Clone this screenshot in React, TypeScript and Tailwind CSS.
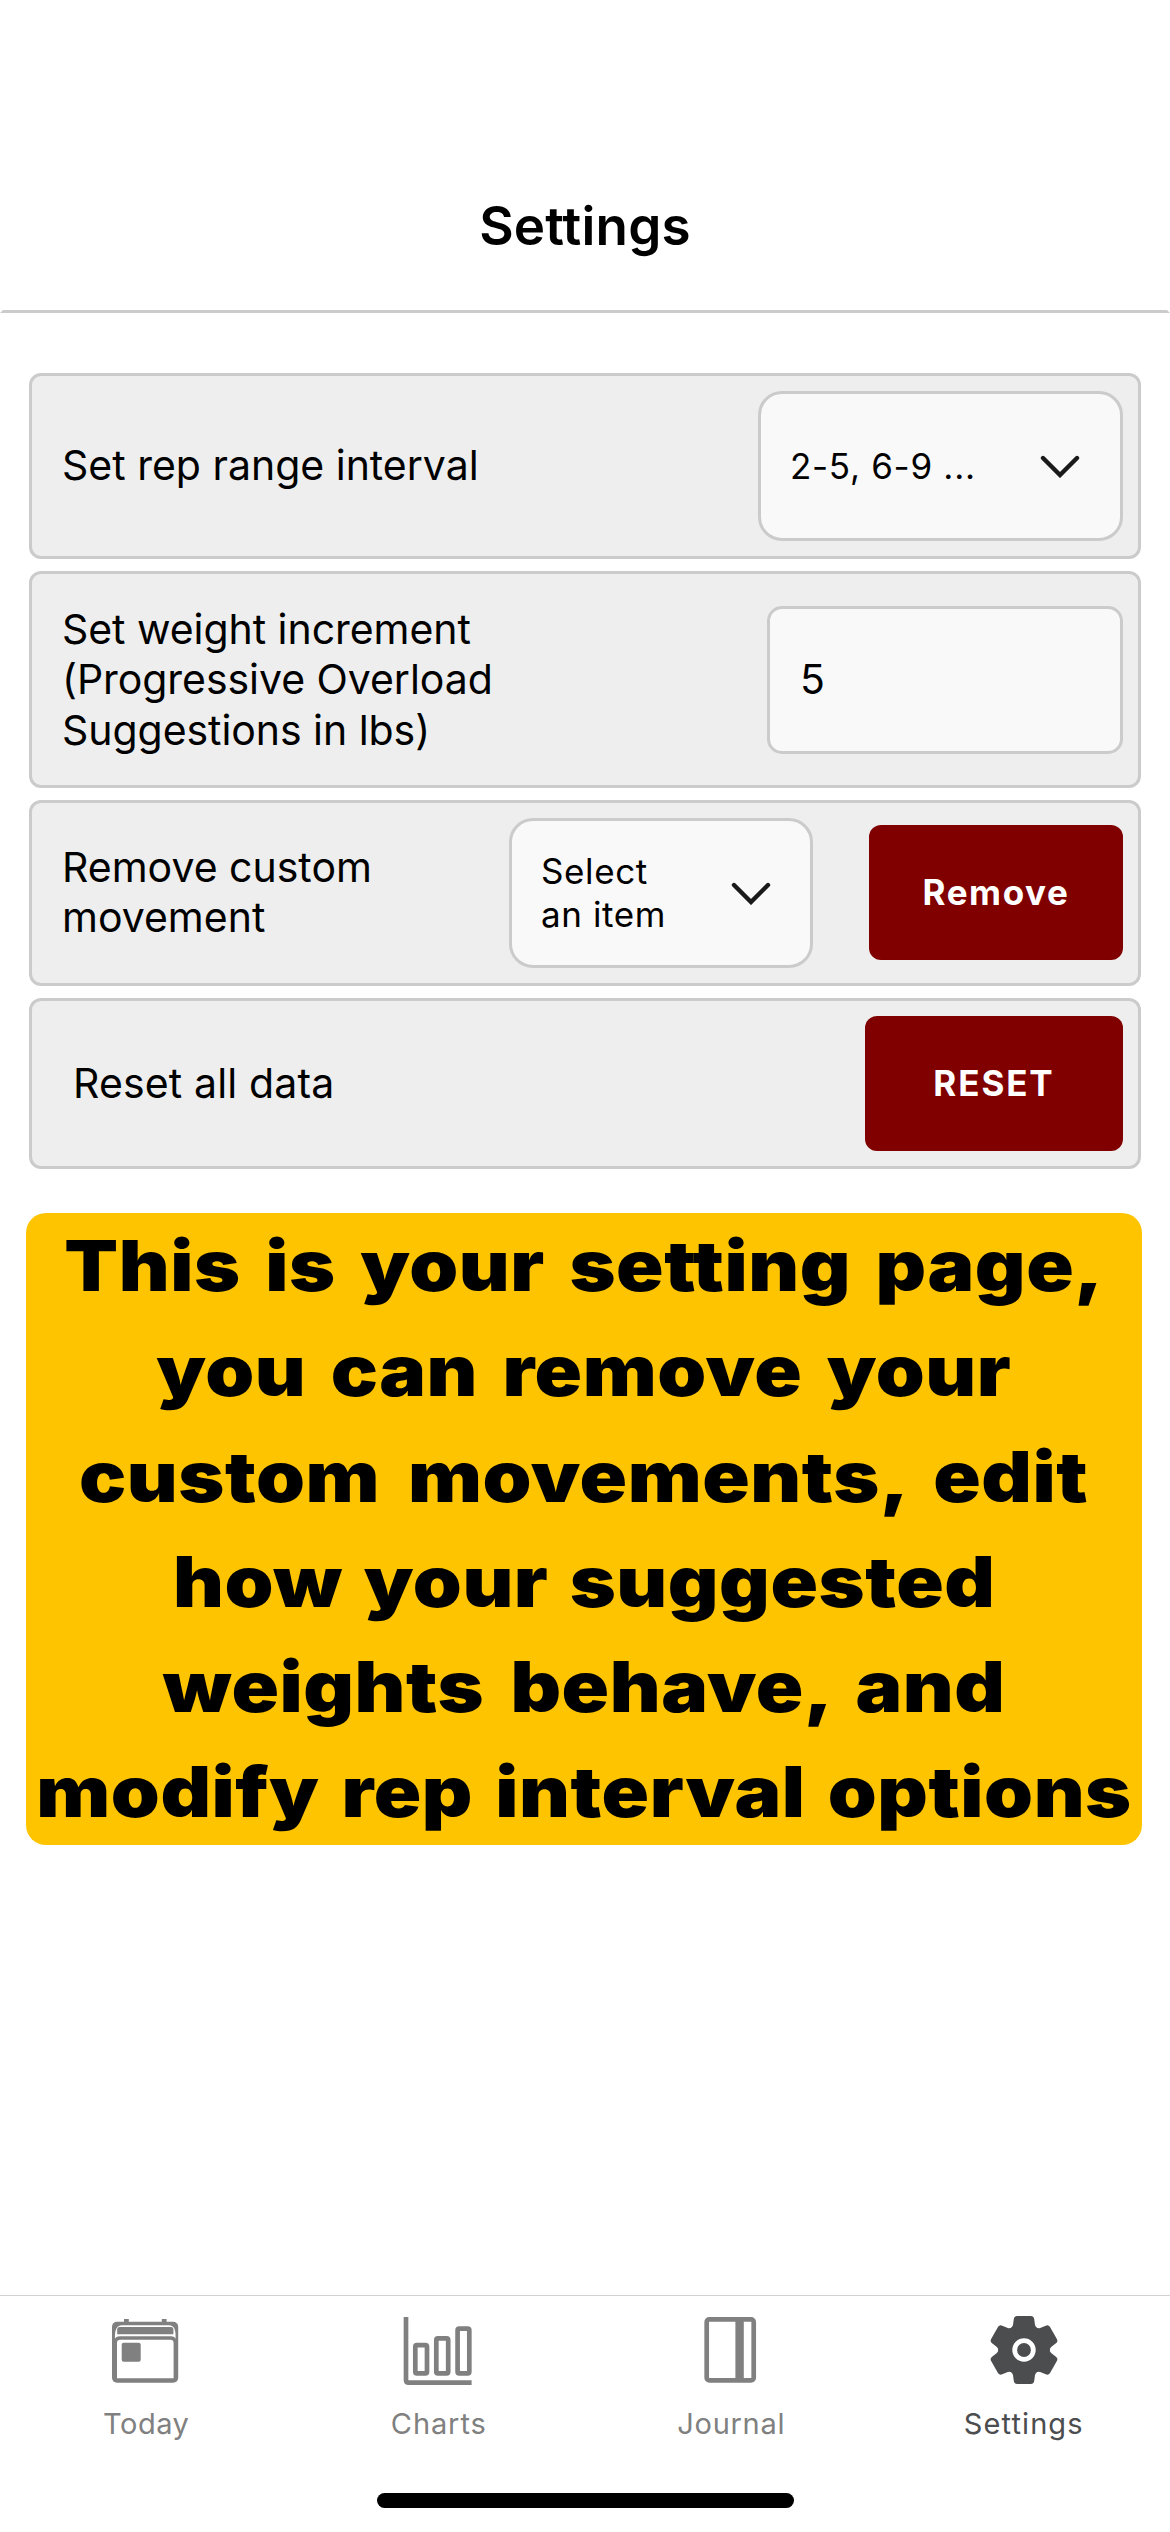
import React from "react";

function Chevron() {
  return (
    <svg width="40" height="23" viewBox="0 0 40 23" fill="none" className="shrink-0">
      <path d="M3 3 L20 20 L37 3" stroke="#1a1a1a" strokeWidth="4.4" strokeLinecap="round" strokeLinejoin="miter" />
    </svg>
  );
}

function Row({ className, children }: { className: string; children: React.ReactNode }) {
  return (
    <div
      className={`flex items-center justify-between rounded-[12px] border-[3px] border-[#cbcbcb] bg-[#eeeeee] pr-[15px] ${className}`}
    >
      {children}
    </div>
  );
}

function Label({ lines, className = "" }: { lines: string[]; className?: string }) {
  return (
    <div className={`text-[41px] leading-[50.5px] whitespace-nowrap ${className}`}>
      {lines.map((line) => (
        <div key={line}>{line}</div>
      ))}
    </div>
  );
}

function TodayIcon() {
  return (
    <svg width="72" height="72" viewBox="0 0 72 72" fill="#808080">
      <rect x="14" y="4" width="4.8" height="5" />
      <rect x="51.8" y="4" width="4.8" height="5" />
      <rect x="2" y="6.7" width="66.2" height="61" rx="5" />
      <path d="M5 24 C4.6 15 6.5 10.2 12 10.2 H59 C64.5 10.2 66 15 65.6 24 C65 21.8 63.5 21.4 61 21.2 H10 C7 21.4 5.6 21.8 5 24 Z" fill="#fff" />
      <path d="M7.2 14 Q7.4 12 9.5 12 H61 Q63.2 12 63.4 14 V19.2 H7.2 Z" />
      <path d="M7 28 Q7 24.7 10.3 24.7 H60.2 Q63.6 24.7 63.6 28 V63.3 H7 Z" fill="#fff" />
      <rect x="11.7" y="27.8" width="19" height="19" rx="2" />
    </svg>
  );
}

function ChartsIcon() {
  return (
    <svg width="72" height="72" viewBox="0 0 72 72" fill="none" stroke="#808080" strokeWidth="4.7">
      <path d="M3 2 V65 Q3 67.6 5.6 67.6 H68.6" />
      <rect x="12.3" y="30.1" width="11.7" height="28.3" rx="1.6" />
      <rect x="33.3" y="23.4" width="11.9" height="35" rx="1.6" />
      <rect x="54.6" y="13.7" width="11.7" height="44.7" rx="1.6" />
    </svg>
  );
}

function JournalIcon() {
  return (
    <svg width="72" height="72" viewBox="0 0 72 72" fill="none">
      <rect x="11.7" y="4.4" width="47" height="61" rx="2.6" stroke="#808080" strokeWidth="4.7" />
      <rect x="40.4" y="4" width="8.4" height="61" fill="#808080" />
    </svg>
  );
}

function GearIcon() {
  return (
    <svg width="72" height="72" viewBox="-36 -35 72 72" fill="#4b4d4f">
      <circle r="25.6" />
      {[0, 60, 120, 180, 240, 300].map((angle) => (
        <path
          key={angle}
          transform={`rotate(${angle})`}
          d="M-14.5 -21 Q-11.5 -22.3 -11 -25 L-10.2 -31 Q-9.7 -34 -6.8 -34 L6.8 -34 Q9.7 -34 10.2 -31 L11 -25 Q11.5 -22.3 14.5 -21 L0 0 Z"
        />
      ))}
      <circle r="9.3" stroke="#fff" strokeWidth="4.8" />
    </svg>
  );
}

const notice = [
  { text: "This is your setting page,", spacing: "[word-spacing:7.5px]" },
  { text: "you can remove your", spacing: "[word-spacing:7.3px]" },
  { text: "custom movements, edit", spacing: "[word-spacing:10.5px]" },
  { text: "how your suggested", spacing: "[word-spacing:4.5px]" },
  { text: "weights behave, and", spacing: "[word-spacing:9px]" },
  { text: "modify rep interval options", spacing: "[word-spacing:5.4px]" },
];

const tabs = [
  { name: "Today", icon: <TodayIcon />, color: "text-[#808080] tracking-[0.5px]" },
  { name: "Charts", icon: <ChartsIcon />, color: "text-[#808080] tracking-[0.9px]" },
  { name: "Journal", icon: <JournalIcon />, color: "text-[#808080] tracking-[0.7px]" },
  { name: "Settings", icon: <GearIcon />, color: "text-[#4b4d4f] tracking-[1.1px]" },
];

export default function App() {
  return (
    <div className="flex h-[2532px] w-[1170px] flex-col overflow-hidden bg-white font-['Inter',sans-serif] text-black">
      <header className="flex h-[313px] shrink-0 items-end justify-center border-[3px] border-transparent border-b-[#cbcbcb] pb-[54px]">
        <h1 className="text-[53px] leading-[60px] font-semibold tracking-[0.2px]">Settings</h1>
      </header>

      <main className="flex flex-1 flex-col pt-[60px]">
        <section className="ml-[29px] flex w-[1112px] flex-col gap-[12px]">
          <Row className="h-[186px] pl-[30px]">
            <Label lines={["Set rep range interval"]} className="pb-[2px]" />
            <div className="flex h-[150px] w-[365px] items-center justify-between rounded-[24px] border-[3px] border-[#cbcbcb] bg-[#f9f9f9] pr-[40px] pl-[29px]">
              <span className="text-[35px] leading-[43px] tracking-[0.7px]">2-5, 6-9 ...</span>
              <Chevron />
            </div>
          </Row>

          <Row className="h-[217px] pl-[30px]">
            <Label
              lines={["Set weight increment", "(Progressive Overload", "Suggestions in lbs)"]}
              className="tracking-[-0.05px]"
            />
            <div className="flex h-[148px] w-[356px] items-center rounded-[15px] border-[3px] border-[#cbcbcb] bg-[#f9f9f9] pl-[30px] text-[41px]">
              5
            </div>
          </Row>

          <Row className="h-[186px] pl-[30px]">
            <Label lines={["Remove custom", "movement"]} className="pb-[2px]" />
            <div className="flex items-center gap-[56px]">
              <div className="flex h-[150px] w-[304px] items-center justify-between rounded-[24px] border-[3px] border-[#cbcbcb] bg-[#f9f9f9] pr-[39px] pl-[29px]">
                <div className="text-[35px] leading-[43px] tracking-[0.6px] whitespace-nowrap">
                  <div>Select</div>
                  <div>an item</div>
                </div>
                <Chevron />
              </div>
              <button className="mb-px h-[135px] w-[254px] rounded-[12px] bg-[#800000] text-[35px] font-bold tracking-[1.6px] text-white">
                Remove
              </button>
            </div>
          </Row>

          <Row className="h-[171px] pl-[41px]">
            <Label lines={["Reset all data"]} className="pb-px tracking-[0.15px]" />
            <button className="h-[135px] w-[258px] rounded-[12px] bg-[#800000] text-[35px] font-bold tracking-[1.9px] text-white">
              RESET
            </button>
          </Row>
        </section>

        <section className="mt-[44px] ml-[26px] flex h-[632px] w-[1116px] flex-col items-center rounded-[20px] bg-[#ffc400]">
          {notice.map((line) => (
            <div
              key={line.text}
              className={`scale-x-[1.12] text-[70px] leading-[105.3px] font-black tracking-[0.5px] whitespace-nowrap ${line.spacing}`}
            >
              {line.text}
            </div>
          ))}
        </section>
      </main>

      <nav className="flex h-[237px] shrink-0 flex-col items-center border-t border-[#d2d2d2]">
        <div className="grid w-full grid-cols-4 pt-[19px]">
          {tabs.map((tab) => (
            <div key={tab.name} className="flex flex-col items-center">
              {tab.icon}
              <span className={`mt-[19px] text-[29px] leading-[36px] ${tab.color}`}>{tab.name}</span>
            </div>
          ))}
        </div>
        <div className="mt-[51px] h-[15px] w-[417px] rounded-full bg-black" />
      </nav>
    </div>
  );
}
